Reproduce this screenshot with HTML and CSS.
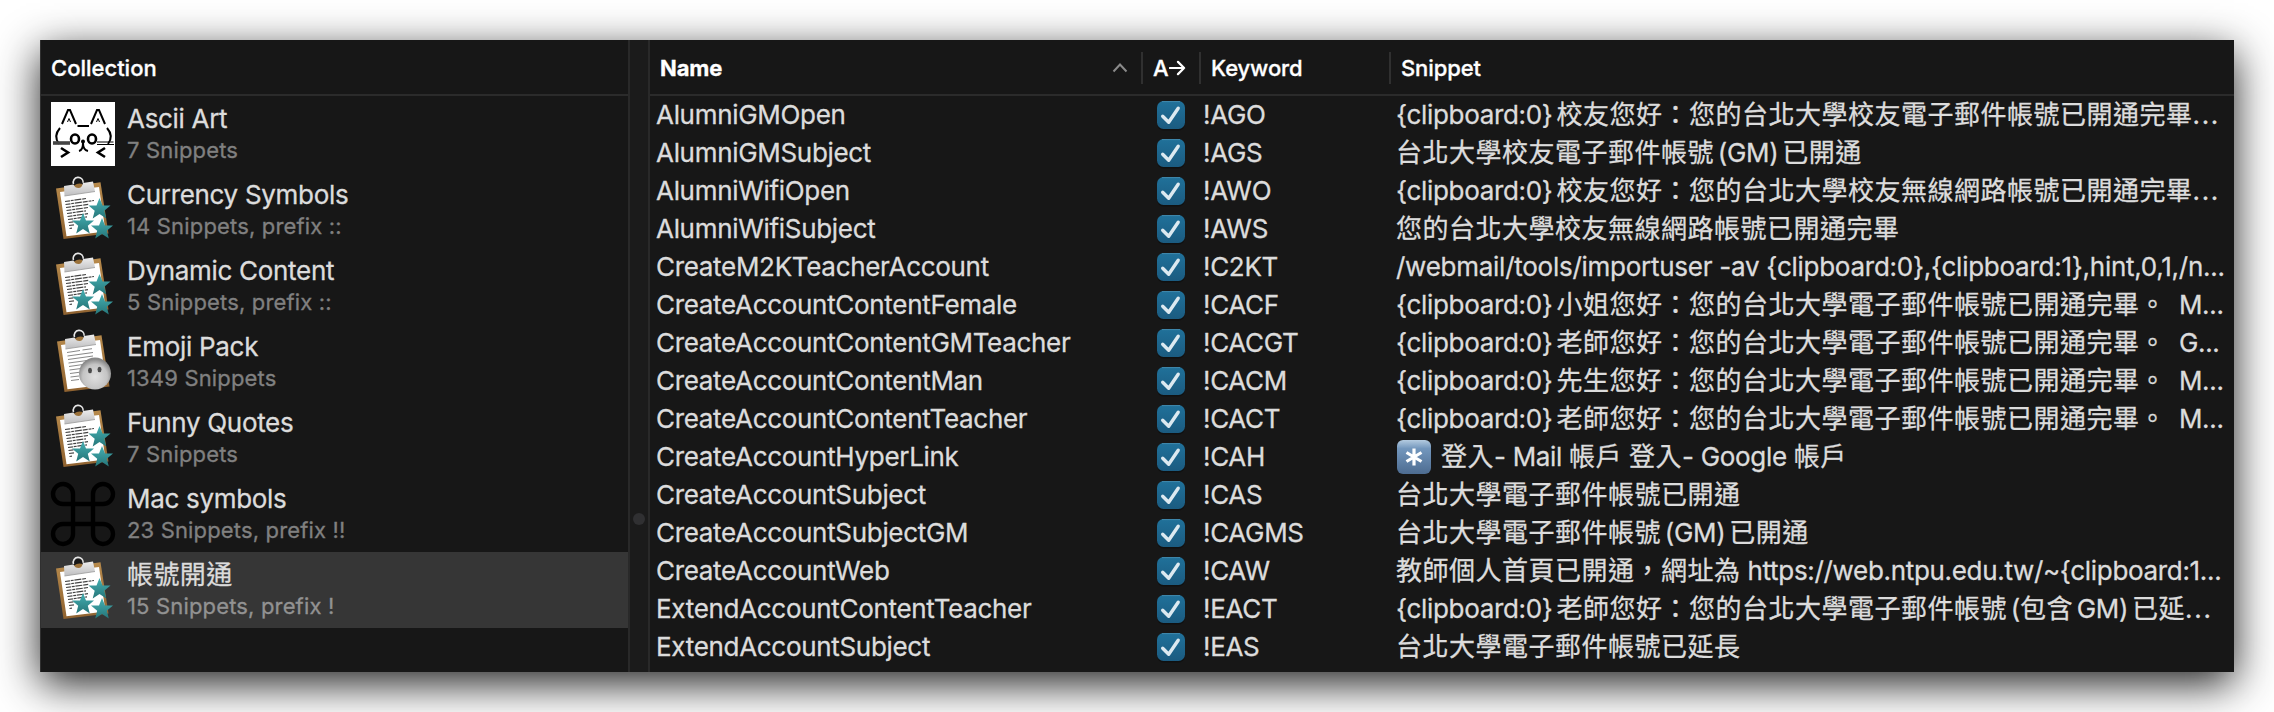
FILE: index.html
```html
<!DOCTYPE html>
<html lang="zh-Hant">
<head>
<meta charset="utf-8">
<title>Snippets</title>
<link rel="stylesheet" href="styles.css">
</head>
<body>
<svg class="defs" aria-hidden="true">
  <defs>
    <linearGradient id="teal" x1="0" y1="0" x2="0" y2="1"><stop offset="0" stop-color="#45b0b3"/><stop offset="1" stop-color="#267679"/></linearGradient>
    <linearGradient id="metal" x1="0" y1="0" x2="0" y2="1"><stop offset="0" stop-color="#eee"/><stop offset="1" stop-color="#bdbdbf"/></linearGradient>
    <linearGradient id="wood" x1="0" y1="0" x2="0" y2="1"><stop offset="0" stop-color="#b78a4c"/><stop offset="1" stop-color="#8f6230"/></linearGradient>
    <linearGradient id="blue" x1="0" y1="0" x2="0" y2="1"><stop offset="0" stop-color="#20719a"/><stop offset="1" stop-color="#1b5b80"/></linearGradient>
    <linearGradient id="key" x1="0" y1="0" x2="0" y2="1"><stop offset="0" stop-color="#b4cbe0"/><stop offset=".25" stop-color="#7397bd"/><stop offset="1" stop-color="#4d6c91"/></linearGradient>
    <radialGradient id="ball" cx=".5" cy=".6" r=".55"><stop offset="0" stop-color="#e0e0e0"/><stop offset=".7" stop-color="#c4c4c4"/><stop offset="1" stop-color="#888"/></radialGradient>
    <path id="star" d="M0-11 3-3.600 11-3.400 4.800 1.700 6.800 9.400 0 5-6.800 9.400-4.800 1.700-11-3.400-3-3.600Z" fill="url(#teal)"/>
    <g id="clip">
      <path d="M5 10.500 49.500 4.300 57.500 55.500 12.500 61Z" fill="url(#wood)"/>
      <path d="M9 14 48 9 54.500 53.500 15.500 58.300Z" fill="#fff"/>
      <circle cx="27" cy="5.500" r="4.500" fill="#171717"/>
      <path d="M23 7.500Q27 4.500 31.500 6V10H23Z" fill="#9a713a"/>
      <path d="M13 8 22.500 6.500Q24 10 27.500 10T32 5L42 3.500 44 13.500 13.500 18Z" fill="url(#metal)"/>
      <path d="M13.500 18 44 13.500" stroke="#999" stroke-width=".8"/>
      <path d="M22.500 6A5 5 0 1 1 32.200 4.800" fill="none" stroke="#e6e6e6" stroke-width="1.600"/>
    </g>
    <g id="stars-icon">
      <use href="#clip"/>
      <path d="M14 23.500 35 20.500M14.500 26.500 43 22.500M15 29.500 38 26.300M15.500 32.500 37 29.500M16 35.500 35 32.800M16.500 38.500 37 35.700M17 41.500 36 38.800M17.500 44.500 24 43.600M18 47.500 23 46.800M18.500 50.500 21 50.200" stroke="#444" stroke-width="1.200" stroke-dasharray="5 .8 3 .7 7 .9" fill="none"/>
      <use href="#star" transform="translate(48.500 31)"/>
      <use href="#star" transform="translate(32 46)"/>
      <use href="#star" transform="translate(51 51)"/>
    </g>
    <g id="check">
      <rect x="1" y="1.500" width="28" height="28" rx="6.500" fill="#0c0c0c" opacity=".6"/>
      <rect x="1" y="0" width="28" height="28" rx="6.500" fill="url(#blue)"/>
      <path d="M6 .6H24" stroke="#4088ac" stroke-width="1"/>
      <path d="M6.700 15.200 12.700 21.200 22.200 7.200" fill="none" stroke="#dce9f0" stroke-width="3.400" stroke-linecap="round" stroke-linejoin="round"/>
    </g>
  </defs>
</svg>
<main class="window">
  <section class="sidebar">
    <header class="head side-head">Collection</header>
    <ul class="collections">
      <li class="item">
        <svg class="icon" viewBox="0 0 64 64"><rect width="64" height="64" fill="#fff"/>
          <g fill="none" stroke="#000" stroke-width="2">
            <path d="M11 22 17 8H19L25 22M40 22 46 8H48L54 22M26.500 24H38" />
            <path d="M16.500 20 18 16.500 19.500 20M45.500 20 47 16.500 48.500 20" stroke-width="1"/>
            <path d="M9 26Q2 34 8 42M56 26Q63 34 57 42"/>
            <ellipse cx="24" cy="37" rx="4" ry="4.500" stroke-width="2.600"/><ellipse cx="41" cy="37" rx="4" ry="4.500" stroke-width="2.600"/>
            <path d="M28 49Q32 48 32 41Q32 48 37 49" />
            <path d="M10 46 17 50.500 10 55M54 46 47 50.500 54 55" stroke-width="2.600"/>
            <path d="M2 41H19" stroke="#444" stroke-width="3.600"/><path d="M46 40H62.500M46 42.500H63" stroke-width="1.200"/>
          </g><circle cx="32" cy="39.500" r="2"/></svg>
        <div class="label"><div class="title">Ascii Art</div><div class="sub">7 Snippets</div></div>
      </li>
      <li class="item"><svg class="icon" viewBox="0 0 64 64"><use href="#stars-icon"/></svg>
        <div class="label"><div class="title">Currency Symbols</div><div class="sub">14 Snippets, prefix ::</div></div></li>
      <li class="item"><svg class="icon" viewBox="0 0 64 64"><use href="#stars-icon"/></svg>
        <div class="label"><div class="title">Dynamic Content</div><div class="sub">5 Snippets, prefix ::</div></div></li>
      <li class="item"><svg class="icon" viewBox="0 0 64 64"><use href="#clip" transform="translate(1 1)"/>
          <path d="M16 22.500 29 20.500M31.500 20 41 18.700M16.500 26 42 22.500M17 29.500 42 26M17.500 33 40 30M18 36.500 32 34.500M18.500 40 30 38.500M19 43.500 29 42.200M19.500 47 28 46M20 50.500 28 49.500" stroke="#888" stroke-width="1"/>
          <circle cx="44" cy="43.500" r="16" fill="url(#ball)"/><ellipse cx="39" cy="40.500" rx="2" ry="2.700" fill="#4a4a4a"/><ellipse cx="48.500" cy="39.500" rx="2" ry="2.700" fill="#4a4a4a"/></svg>
        <div class="label"><div class="title">Emoji Pack</div><div class="sub">1349 Snippets</div></div></li>
      <li class="item"><svg class="icon" viewBox="0 0 64 64"><use href="#stars-icon"/></svg>
        <div class="label"><div class="title">Funny Quotes</div><div class="sub">7 Snippets</div></div></li>
      <li class="item"><svg class="icon" viewBox="0 0 64 64"><path d="M22 12.500A10 10 0 1 0 12.500 22H51.500A10 10 0 1 0 42 12.500V51.500A10 10 0 1 0 51.500 42H12.500A10 10 0 1 0 22 51.500Z" fill="none" stroke="#000" stroke-width="4.400"/></svg>
        <div class="label"><div class="title">Mac symbols</div><div class="sub">23 Snippets, prefix !!</div></div></li>
      <li class="item selected"><svg class="icon" viewBox="0 0 64 64"><use href="#stars-icon"/></svg>
        <div class="label"><div class="title cjk">帳號開通</div><div class="sub">15 Snippets, prefix !</div></div></li>
    </ul>
  </section>
  <div class="splitter"><span class="grip"></span></div>
  <section class="table">
    <header class="head cols">
      <div class="th name-h">Name<svg class="sort" viewBox="0 0 16 10"><path d="M1.500 8.500 8 1.500 14.500 8.500" fill="none" stroke="#8a8a8a" stroke-width="2"/></svg></div>
      <div class="th">A<svg class="arrow" viewBox="0 0 18 18"><path d="M1 9H16M9.500 2.500 16 9 9.500 15.500" fill="none" stroke="#fff" stroke-width="2.300" stroke-linecap="round" stroke-linejoin="round"/></svg></div>
      <div class="th">Keyword</div>
      <div class="th">Snippet</div>
    </header>
    <div class="row"><span>AlumniGMOpen</span><svg class="cb" viewBox="0 0 30 30"><use href="#check"/></svg><span>!AGO</span><span class="tc"><i>{clipboard:0}</i> 校友您好：您的台北大學校友電子郵件帳號已開通完畢<b>...</b></span></div>
    <div class="row"><span>AlumniGMSubject</span><svg class="cb" viewBox="0 0 30 30"><use href="#check"/></svg><span>!AGS</span><span class="tc">台北大學校友電子郵件帳號 <i>(GM)</i> 已開通</span></div>
    <div class="row"><span>AlumniWifiOpen</span><svg class="cb" viewBox="0 0 30 30"><use href="#check"/></svg><span>!AWO</span><span class="tc"><i>{clipboard:0}</i> 校友您好：您的台北大學校友無線網路帳號已開通完畢<b>...</b></span></div>
    <div class="row"><span>AlumniWifiSubject</span><svg class="cb" viewBox="0 0 30 30"><use href="#check"/></svg><span>!AWS</span><span class="tc">您的台北大學校友無線網路帳號已開通完畢</span></div>
    <div class="row"><span>CreateM2KTeacherAccount</span><svg class="cb" viewBox="0 0 30 30"><use href="#check"/></svg><span>!C2KT</span><span class="latin">/webmail/tools/importuser -av {clipboard:0},{clipboard:1},hint,0,1,/n...</span></div>
    <div class="row"><span>CreateAccountContentFemale</span><svg class="cb" viewBox="0 0 30 30"><use href="#check"/></svg><span>!CACF</span><span class="tc"><i>{clipboard:0}</i> 小姐您好：您的台北大學電子郵件帳號已開通完畢。<i class="tail">M...</i></span></div>
    <div class="row"><span>CreateAccountContentGMTeacher</span><svg class="cb" viewBox="0 0 30 30"><use href="#check"/></svg><span>!CACGT</span><span class="tc"><i>{clipboard:0}</i> 老師您好：您的台北大學電子郵件帳號已開通完畢。<i class="tail">G...</i></span></div>
    <div class="row"><span>CreateAccountContentMan</span><svg class="cb" viewBox="0 0 30 30"><use href="#check"/></svg><span>!CACM</span><span class="tc"><i>{clipboard:0}</i> 先生您好：您的台北大學電子郵件帳號已開通完畢。<i class="tail">M...</i></span></div>
    <div class="row"><span>CreateAccountContentTeacher</span><svg class="cb" viewBox="0 0 30 30"><use href="#check"/></svg><span>!CACT</span><span class="tc"><i>{clipboard:0}</i> 老師您好：您的台北大學電子郵件帳號已開通完畢。<i class="tail">M...</i></span></div>
    <div class="row"><span>CreateAccountHyperLink</span><svg class="cb" viewBox="0 0 30 30"><use href="#check"/></svg><span>!CAH</span><span class="tc link"><svg class="keycap" viewBox="0 0 34 34"><rect width="34" height="34" rx="6" fill="url(#key)"/><path d="M17 8.500V25.500M9.500 12.500 24.500 21.500M24.500 12.500 9.500 21.500" stroke="#fff" stroke-width="3.200"/></svg>登入<i>- Mail </i>帳戶<i> </i>登入<i>- Google </i>帳戶</span></div>
    <div class="row"><span>CreateAccountSubject</span><svg class="cb" viewBox="0 0 30 30"><use href="#check"/></svg><span>!CAS</span><span class="tc">台北大學電子郵件帳號已開通</span></div>
    <div class="row"><span>CreateAccountSubjectGM</span><svg class="cb" viewBox="0 0 30 30"><use href="#check"/></svg><span>!CAGMS</span><span class="tc">台北大學電子郵件帳號 <i>(GM)</i> 已開通</span></div>
    <div class="row"><span>CreateAccountWeb</span><svg class="cb" viewBox="0 0 30 30"><use href="#check"/></svg><span>!CAW</span><span class="tc">教師個人首頁已開通，網址為<i> https://web.ntpu.edu.tw/~{clipboard:1...</i></span></div>
    <div class="row"><span>ExtendAccountContentTeacher</span><svg class="cb" viewBox="0 0 30 30"><use href="#check"/></svg><span>!EACT</span><span class="tc"><i>{clipboard:0}</i> 老師您好：您的台北大學電子郵件帳號 <i>(</i>包含 <i>GM)</i> 已延<b>...</b></span></div>
    <div class="row"><span>ExtendAccountSubject</span><svg class="cb" viewBox="0 0 30 30"><use href="#check"/></svg><span>!EAS</span><span class="tc">台北大學電子郵件帳號已延長</span></div>
  </section>
</main>
</body>
</html>
```
FILE: styles.css
```css
* { box-sizing: border-box; }
body {
  margin: 0;
  padding: 40px;
  height: 712px;
  overflow: hidden;
  background: #fff;
  color: #dcdcdc;
  font: 400 26px/38px Inter, "Noto Sans CJK TC", sans-serif;
  letter-spacing: -0.31px;
  -webkit-text-stroke: .3px currentColor;
}
.defs { position: absolute; width: 0; height: 0; }
.window {
  display: flex;
  width: 2194px;
  height: 632px;
  background: #171717;
  box-shadow: 0 12px 40px rgba(0, 0, 0, .87);
}
.head {
  height: 56px;
  border-bottom: 2px solid #2b2b2b;
  color: #fff;
  font-size: 22px;
  font-weight: 500;
  line-height: 56px;
  letter-spacing: -0.1px;
}
.sidebar { flex: none; width: 588px; border-left: 1px solid #303030; }
.side-head { padding-left: 10px; letter-spacing: 0; }
.collections { margin: 0; padding: 0; list-style: none; }
.item { display: flex; height: 76px; padding: 6px 0 0 10px; gap: 12px; }
.selected { background: #363636; }
.icon { width: 64px; height: 64px; overflow: visible; }
.label { padding-top: 1px; white-space: nowrap; }
.title { height: 32px; line-height: 32px; }
.title.cjk { letter-spacing: .4px; }
.sub { height: 30px; line-height: 30px; font-size: 22px; letter-spacing: .16px; color: #808080; }
.selected .sub { color: #929292; }
.splitter {
  display: flex;
  flex: none;
  width: 22px;
  align-items: flex-start;
  justify-content: center;
  padding-top: 473px;
  border: solid #292929;
  border-width: 0 2px;
  background: #1b1b1b;
}
.grip { width: 12px; height: 12px; border-radius: 50%; background: #303032; }
.table { flex: 1; min-width: 0; }
.cols, .row { display: grid; grid-template-columns: 491px 58px 190px minmax(0, 1fr); }
.cols { padding-top: 12px; line-height: 32px; }
.th { display: flex; height: 32px; padding-left: 10px; border-left: 2px solid #303030; align-items: center; }
.name-h { border: 0; padding-right: 13px; justify-content: space-between; font-weight: 700; }
.sort { width: 16px; height: 10px; }
.arrow { width: 17px; height: 18px; }
.row { height: 38px; grid-template-columns: 491px 56px 193px minmax(0, 1fr); padding-left: 6px; white-space: pre; }
.cb { width: 30px; height: 30px; margin: 5px 0 0 9px; }
.latin { letter-spacing: -0.26px; }
.tc { letter-spacing: .5px; word-spacing: -4px; }
.tc i { font-style: normal; letter-spacing: -0.32px; word-spacing: 0; }
.tc b { font-weight: 400; letter-spacing: 1.700px; }
.tc .tail { margin-left: 13px; }
.link { display: flex; align-items: center; }
.keycap { width: 34px; height: 34px; margin: 0 10px 0 1px; }
```
